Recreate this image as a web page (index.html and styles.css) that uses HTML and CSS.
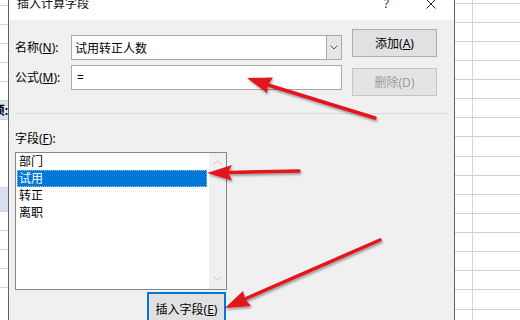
FILE: index.html
```html
<!DOCTYPE html>
<html>
  <head>
    <title>插入计算字段</title>
    <link rel="stylesheet" href="styles.css">
  </head>
  <body>
    <div class="page">
      <div class="sheet-left">
        <div class="lrow"></div>
        <div class="lrow"></div>
        <div class="lrow"></div>
        <div class="lrow"></div>
        <div class="lrow short"></div>
        <div class="lrow short head"><span>项:</span></div>
        <div class="lrow gap"></div>
        <div class="lrow picked"></div>
        <div class="lrow"></div>
        <div class="lrow"></div>
        <div class="lrow"></div>
        <div class="lrow"></div>
        <div class="lrow"></div>
      </div>

      <div class="dialog">
        <div class="titlebar">
          <span class="title">插入计算字段</span>
          <span class="help">?</span>
          <svg class="close" width="10" height="10" viewBox="0 0 10 10">
            <path d="M0.5 0.5 L9.5 9.5 M9.5 0.5 L0.5 9.5" stroke="#222" stroke-width="1" fill="none"/>
          </svg>
        </div>

        <div class="content">
          <div class="top">
            <div class="fields">
              <div class="row">
                <label class="lbl">名称(<u>N</u>):</label>
                <div class="combo">
                  <span class="combo-text">试用转正人数</span>
                  <span class="drop">
                    <svg width="8" height="5" viewBox="0 0 8 5"><path d="M0.5 0.5 L4 4 L7.5 0.5" stroke="#555" fill="none"/></svg>
                  </span>
                </div>
              </div>
              <div class="row">
                <label class="lbl">公式(<u>M</u>):</label>
                <div class="textbox">=</div>
              </div>
            </div>
            <div class="buttons">
              <div class="btn">添加(<u>A</u>)</div>
              <div class="btn disabled">删除(D)</div>
            </div>
          </div>

          <div class="sep"></div>

          <div class="list-label">字段(<u>F</u>):</div>
          <div class="listbox">
            <div class="items">
              <div class="item">部门</div>
              <div class="item selected">试用</div>
              <div class="item">转正</div>
              <div class="item">离职</div>
            </div>
            <div class="scroll">
              <svg width="9" height="5" viewBox="0 0 9 5"><path d="M0.5 4.5 L4.5 0.5 L8.5 4.5" stroke="#c4c4c4" fill="none"/></svg>
              <svg width="9" height="5" viewBox="0 0 9 5"><path d="M0.5 0.5 L4.5 4.5 L8.5 0.5" stroke="#c4c4c4" fill="none"/></svg>
            </div>
          </div>
          <div class="btn insert">插入字段(<u>E</u>)</div>
        </div>
      </div>

      <div class="sheet-right">
        <div class="rrow first"></div>
        <div class="rrow"></div><div class="rrow"></div><div class="rrow"></div>
        <div class="rrow"></div><div class="rrow"></div><div class="rrow"></div>
        <div class="rrow"></div><div class="rrow"></div><div class="rrow"></div>
        <div class="rrow"></div><div class="rrow"></div><div class="rrow"></div>
        <div class="rrow"></div><div class="rrow"></div><div class="rrow"></div>
        <div class="rrow"></div>
      </div>
    </div>

    <!-- red callout arrows drawn over the screenshot -->
    <svg class="arrows" width="520" height="320" viewBox="0 0 520 320">
      <defs>
        <filter id="shadow" x="-20%" y="-20%" width="140%" height="140%">
          <feDropShadow dx="1" dy="2" stdDeviation="1.2" flood-color="#000" flood-opacity="0.35"/>
        </filter>
      </defs>
      <g filter="url(#shadow)" fill="#e3131b" stroke="#e3131b">
        <line x1="375" y1="118" x2="268" y2="85" stroke-width="3.5" stroke-linecap="round"/>
        <polygon points="247,78 273,77.5 268,85 267,93" stroke="none"/>

        <line x1="299" y1="171" x2="228" y2="172.5" stroke-width="3.5" stroke-linecap="round"/>
        <polygon points="207,173 232,165 228,172.5 232,180.5" stroke="none"/>

        <line x1="380" y1="240" x2="245" y2="299" stroke-width="3.5" stroke-linecap="round"/>
        <polygon points="225,308 243,291 245,299 251,306" stroke="none"/>
      </g>
    </svg>
  </body>
</html>
```

FILE: styles.css
```css
body {
  margin: 0;
  width: 520px;
  height: 320px;
  overflow: hidden;
  background: #fff;
  font-family: "Noto Sans", "Noto Sans CJK SC", sans-serif;
  font-size: 12px;
  color: #000;
  position: relative;
}

.page {
  display: flex;
  height: 320px;
  overflow: hidden;
}

/* spreadsheet edges behind the dialog */
.sheet-left {
  width: 8px;
  padding-top: 5px;
  display: flex;
  flex-direction: column;
  overflow: hidden;
}

.lrow {
  height: 18px;
  border-top: 1px solid #d4d4d4;
  flex-shrink: 0;
}

.lrow.short {
  height: 18px;
}

.lrow.head {
  background: #dde3ef;
  display: flex;
  justify-content: flex-end;
  align-items: center;
  font-weight: bold;
  font-size: 12px;
  overflow: hidden;
  white-space: nowrap;
}

.lrow.gap {
  height: 67px;
}

.lrow.picked {
  height: 23px;
  background: #d9dff0;
}

.sheet-right {
  flex: 1;
  padding-top: 3px;
  display: flex;
  flex-direction: column;
  background: linear-gradient(to right, transparent 17px, #d4d4d4 17px, #d4d4d4 18px, transparent 18px);
}

.rrow {
  height: 18px;
  border-top: 1px solid #d0d0d0;
  flex-shrink: 0;
}

.rrow:nth-child(8n) {
  height: 19px;
}

/* dialog */
.dialog {
  width: 445px;
  border-left: 1px solid #616161;
  border-right: 1px solid #616161;
  background: #f0f0f0;
  display: flex;
  flex-direction: column;
}

.titlebar {
  height: 20px;
  flex-shrink: 0;
  background: #fff;
  display: flex;
  align-items: flex-start;
  overflow: hidden;
}

.title {
  flex: 1;
  padding-left: 8px;
  margin-top: -3px;
  line-height: 14px;
  font-size: 12px;
  color: #111;
}

.help {
  margin-top: -3px;
  line-height: 14px;
  font-size: 12px;
  color: #333;
}

.close {
  margin-left: 37px;
  margin-right: 18px;
  margin-top: -1px;
}

.content {
  flex-shrink: 0;
  padding-left: 6px;
  padding-right: 6px;
  display: flex;
  flex-direction: column;
}

.top {
  display: flex;
  margin-top: 9px;
}

.fields {
  margin-top: 6px;
  display: flex;
  flex-direction: column;
  gap: 5px;
}

.row {
  display: flex;
  align-items: center;
}

.lbl {
  width: 56px;
  line-height: 16px;
}

.combo,
.textbox {
  width: 271px;
  height: 25px;
  box-sizing: border-box;
  border: 1px solid #a9a9a9;
  background: #fff;
  display: flex;
  align-items: center;
}

.combo-text {
  flex: 1;
  padding-left: 3px;
}

.drop {
  width: 16px;
  height: 25px;
  margin: -1px -1px -1px 0;
  box-sizing: border-box;
  border: 1px solid #a9a9a9;
  background: #e6e6e6;
  display: flex;
  align-items: center;
  justify-content: center;
}

.textbox {
  padding-left: 5px;
}

.buttons {
  margin-left: 10px;
  display: flex;
  flex-direction: column;
  gap: 11px;
}

.btn {
  width: 85px;
  height: 28px;
  box-sizing: border-box;
  border: 1px solid #adadad;
  background: #e1e1e1;
  display: flex;
  align-items: center;
  justify-content: center;
}

.btn.disabled {
  border-color: #c4c4c4;
  background: #e4e4e4;
  color: #9a9a9a;
}

.sep {
  margin-top: 17px;
  height: 1px;
  background: #d9d9d9;
}

.list-label {
  margin-top: 17px;
  line-height: 16px;
}

.listbox {
  margin-top: 5px;
  width: 212px;
  height: 138px;
  box-sizing: border-box;
  border: 1px solid #828790;
  background: #fff;
  display: flex;
}

.items {
  flex: 1;
  padding-left: 1px;
}

.item {
  height: 17px;
  line-height: 17px;
  padding-left: 2px;
  width: 190px;
  box-sizing: border-box;
}

.item.selected {
  background: #0078d7;
  color: #fff;
  outline: 1px dotted #9fc4ea;
  outline-offset: -1px;
}

.scroll {
  width: 17px;
  background: #f0f0f0;
  display: flex;
  flex-direction: column;
  align-items: center;
  justify-content: space-between;
  padding: 7px 0 8px;
}

.btn.insert {
  margin-top: 2px;
  margin-left: 132px;
  width: 79px;
  height: 34px;
  border: 2px solid #0078d7;
}

.arrows {
  position: absolute;
  left: 0;
  top: 0;
  pointer-events: none;
}
```
